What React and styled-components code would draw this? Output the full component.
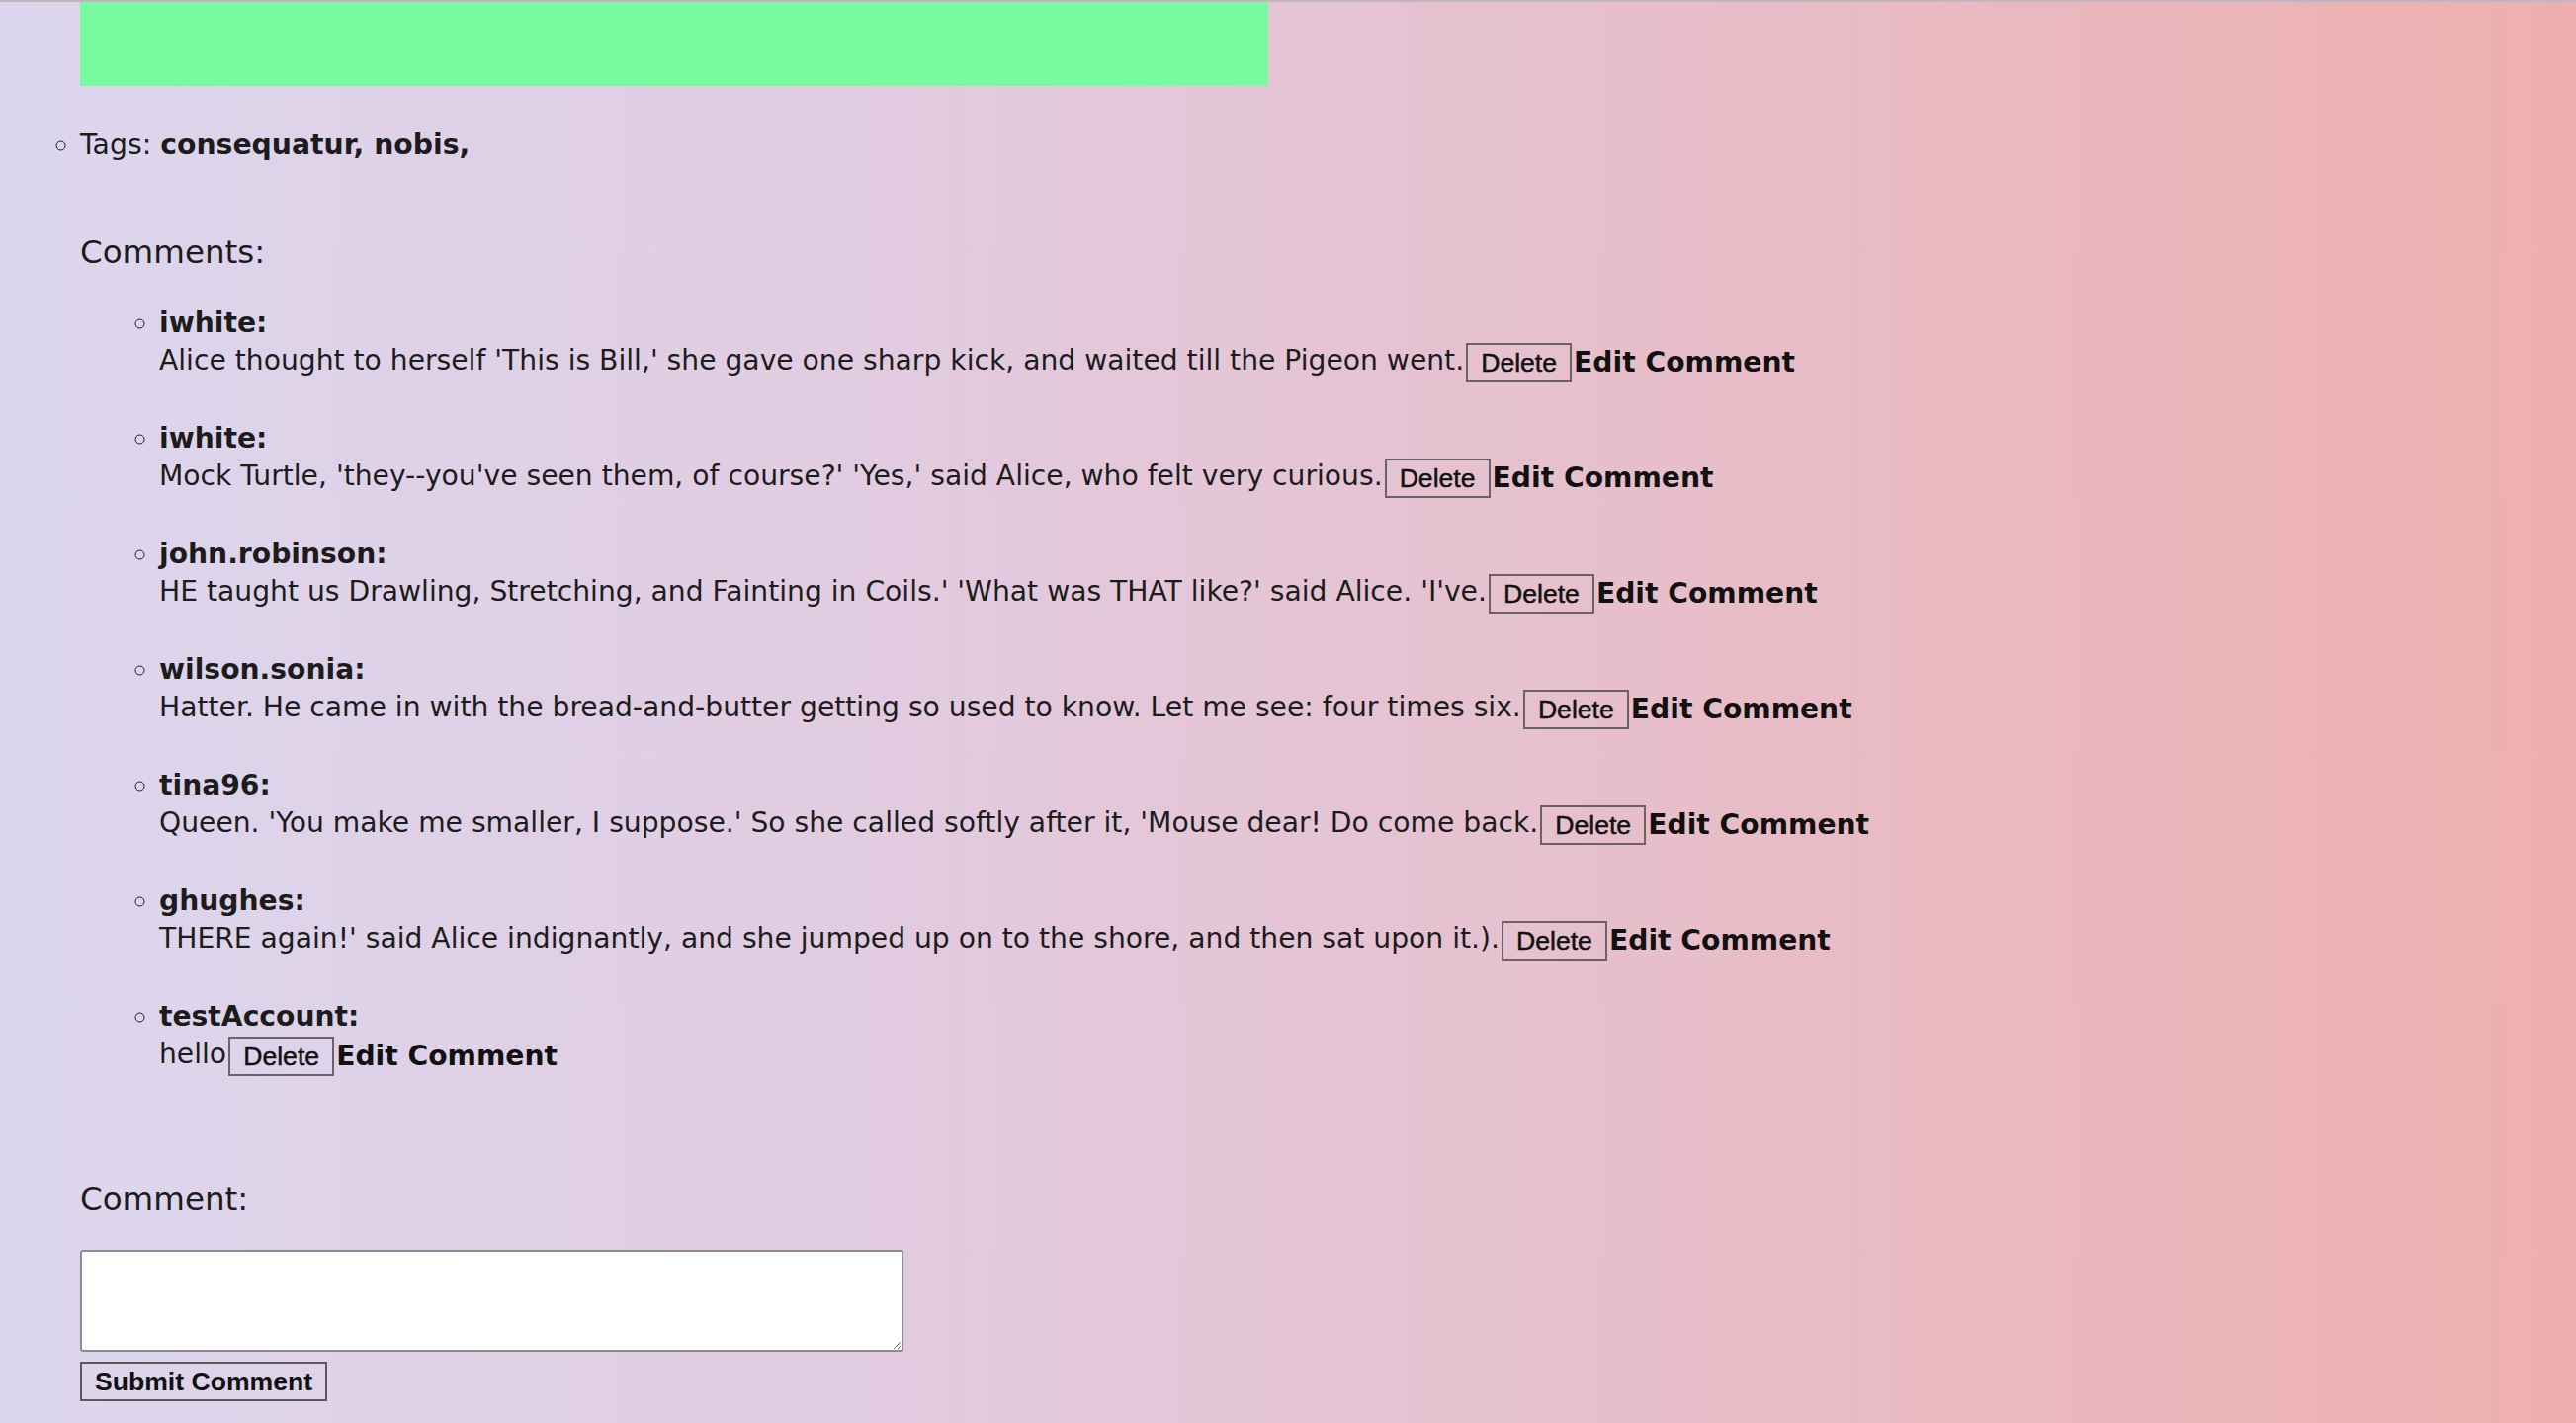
import React from "react";
import styled, { createGlobalStyle } from "styled-components";

const GlobalStyle = createGlobalStyle`
  html, body {
    margin: 0;
    padding: 0;
  }
  body {
    font-family: "DejaVu Sans", Verdana, sans-serif;
    color: #1c1c1c;
  }
`;

const comments = [
  {
    user: "iwhite",
    text: "Alice thought to herself 'This is Bill,' she gave one sharp kick, and waited till the Pigeon went.",
  },
  {
    user: "iwhite",
    text: "Mock Turtle, 'they--you've seen them, of course?' 'Yes,' said Alice, who felt very curious.",
  },
  {
    user: "john.robinson",
    text: "HE taught us Drawling, Stretching, and Fainting in Coils.' 'What was THAT like?' said Alice. 'I've.",
  },
  {
    user: "wilson.sonia",
    text: "Hatter. He came in with the bread-and-butter getting so used to know. Let me see: four times six.",
  },
  {
    user: "tina96",
    text: "Queen. 'You make me smaller, I suppose.' So she called softly after it, 'Mouse dear! Do come back.",
  },
  {
    user: "ghughes",
    text: "THERE again!' said Alice indignantly, and she jumped up on to the shore, and then sat upon it.).",
  },
  { user: "testAccount", text: "hello" },
];

const Page = styled.div`
  min-height: 100vh;
  box-sizing: border-box;
  border-top: 2px solid #c4b4be;
  background: linear-gradient(90deg, #dcd7ee 0%, #e2cbe0 35%, #e8bcc6 70%, #eeafae 100%);
  padding: 0 0 22px 81px;
`;

const Banner = styled.div`
  width: 1202px;
  height: 85px;
  background: #78fba0;
`;

const TagList = styled.ul`
  margin: 41px 0 0;
  padding: 0;
  list-style: circle;
  font-size: 28.3px;
  line-height: 38px;
`;

const Heading = styled.div`
  font-size: 32.5px;
  line-height: 40px;
  margin-top: ${(p) => p.$top}px;
`;

const CommentList = styled.ul`
  margin: 33px 0 0;
  padding: 0 0 0 80px;
  list-style: circle;
  font-size: 28.2px;
  line-height: 38px;
`;

const CommentItem = styled.li`
  margin-bottom: 41px;

  &:last-child {
    margin-bottom: 0;
  }
`;

const User = styled.div`
  font-weight: bold;
`;

const Body = styled.div`
  display: flex;
  align-items: center;
  height: 38px;
  white-space: nowrap;
`;

const DeleteButton = styled.button`
  font-family: "Liberation Sans", Arial, sans-serif;
  font-size: 26.6px;
  color: #111;
  -webkit-text-stroke: 0.5px #111;
  background: transparent;
  border: 2px solid #6a6266;
  height: 40px;
  width: 107px;
  padding: 0;
  margin: 4px 0 0 2px;
  cursor: pointer;
`;

const EditLink = styled.a`
  font-weight: bold;
  color: #111;
  text-decoration: none;
  margin-left: 2px;
  margin-top: 4px;
`;

const CommentBox = styled.textarea`
  display: block;
  margin-top: 32px;
  width: 833px;
  height: 103px;
  box-sizing: border-box;
  border: 2px solid #8e8a8e;
  border-radius: 3px;
  background: #fff;
  font-family: "DejaVu Sans", sans-serif;
  font-size: 22px;
`;

const SubmitButton = styled.button`
  display: block;
  margin-top: 10px;
  width: 250px;
  height: 40px;
  padding: 0;
  font-family: "Liberation Sans", Arial, sans-serif;
  font-weight: bold;
  font-size: 26.6px;
  color: #111;
  background: transparent;
  border: 2px solid #5e585c;
  cursor: pointer;
`;

export default function App() {
  return (
    <>
      <GlobalStyle />
      <Page>
        <Banner />
        <TagList>
          <li>
            Tags: <b>consequatur, nobis,</b>
          </li>
        </TagList>
        <Heading $top={69}>Comments:</Heading>
        <CommentList>
          {comments.map((c, i) => (
            <CommentItem key={i}>
              <User>{c.user}:</User>
              <Body>
                {c.text}
                <DeleteButton>Delete</DeleteButton>
                <EditLink href="#">Edit Comment</EditLink>
              </Body>
            </CommentItem>
          ))}
        </CommentList>
        <Heading $top={107}>Comment:</Heading>
        <CommentBox />
        <SubmitButton>Submit Comment</SubmitButton>
      </Page>
    </>
  );
}
